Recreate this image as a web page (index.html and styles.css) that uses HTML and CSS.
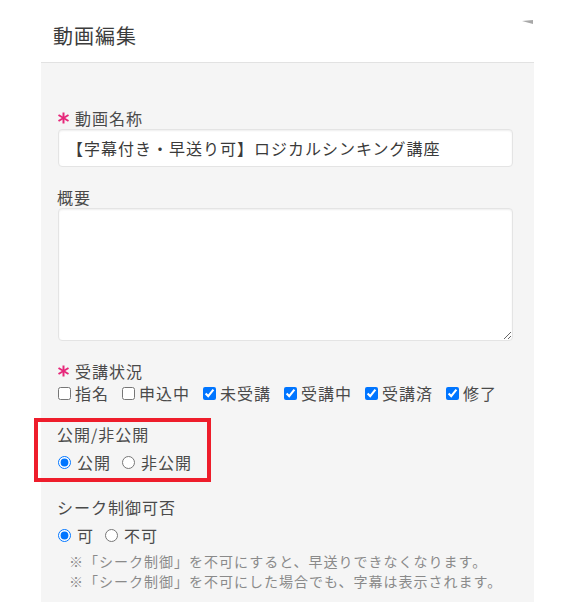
FILE: index.html
```html
<!DOCTYPE html>
<html lang="ja">
<head>
<meta charset="utf-8">
<link rel="stylesheet" href="styles.css">
</head>
<body>
<div class="modal">
  <div class="modal-header">
    <h1 class="modal-title">動画編集</h1>
    <svg class="corner" width="12" height="6" viewBox="0 0 12 6"><polygon points="0,1 11,0 11,4" fill="#a8a8a8"/></svg>
  </div>
  <div class="modal-body">
    <div class="group g-name">
      <div class="label"><svg class="req" width="13" height="12" viewBox="0 0 13 12"><g stroke="#e6287a" stroke-width="2" stroke-linecap="butt"><line x1="6.5" y1="0.5" x2="6.5" y2="11.5"/><line x1="1.5" y1="3" x2="11.5" y2="9"/><line x1="1.5" y1="9" x2="11.5" y2="3"/></g></svg>動画名称</div>
      <input class="text" type="text" value="【字幕付き・早送り可】ロジカルシンキング講座">
    </div>
    <div class="group g-desc">
      <div class="label">概要</div>
      <textarea class="area"></textarea>
    </div>
    <div class="group g-status">
      <div class="label"><svg class="req" width="13" height="12" viewBox="0 0 13 12"><g stroke="#e6287a" stroke-width="2" stroke-linecap="butt"><line x1="6.5" y1="0.5" x2="6.5" y2="11.5"/><line x1="1.5" y1="3" x2="11.5" y2="9"/><line x1="1.5" y1="9" x2="11.5" y2="3"/></g></svg>受講状況</div>
      <div class="checks">
        <label class="check"><input type="checkbox">指名</label>
        <label class="check"><input type="checkbox">申込中</label>
        <label class="check"><input type="checkbox" checked>未受講</label>
        <label class="check"><input type="checkbox" checked>受講中</label>
        <label class="check"><input type="checkbox" checked>受講済</label>
        <label class="check"><input type="checkbox" checked>修了</label>
      </div>
    </div>
    <div class="group g-public">
      <div class="label">公開/非公開</div>
      <div class="radios">
        <label class="radio"><input type="radio" name="pub" checked>公開</label>
        <label class="radio"><input type="radio" name="pub">非公開</label>
      </div>
      <div class="highlight"></div>
    </div>
    <div class="group g-seek">
      <div class="label">シーク制御可否</div>
      <div class="radios">
        <label class="radio"><input type="radio" name="seek" checked>可</label>
        <label class="radio"><input type="radio" name="seek">不可</label>
      </div>
      <p class="note">※「シーク制御」を不可にすると、早送りできなくなります。<br>※「シーク制御」を不可にした場合でも、字幕は表示されます。</p>
    </div>
  </div>
</div>
</body>
</html>
```
FILE: styles.css
```css
* { box-sizing: border-box; }
html, body {
  margin: 0;
  padding: 0;
  background: #ffffff;
}
body {
  font-family: "Noto Sans CJK JP", "Noto Sans", sans-serif;
  color: #4a4a4a;
  letter-spacing: 1px;
}
.modal {
  margin-left: 41px;
  width: 493px;
}
.modal-header {
  position: relative;
  background: #fff;
  border-bottom: 1px solid #e2e2e2;
  padding: 21px 12px 11px;
}
.modal-title {
  margin: 0;
  font-size: 20px;
  line-height: 30px;
  font-weight: 400;
  color: #3c3c3c;
}
.corner {
  position: absolute;
  right: 0;
  top: 20px;
}
.modal-body {
  background: #f5f5f5;
  padding: 44px 21px 11px 16px;
}
.group {
  position: relative;
}
.label {
  display: flex;
  align-items: center;
  font-size: 16px;
  line-height: 22px;
  color: #4a4a4a;
}
.req {
  margin-right: 5px;
  margin-left: 0;
}
.g-name { margin-bottom: 20px; }
.g-desc { margin-bottom: 19px; }
.g-status { margin-bottom: 19px; }
.g-public { margin-bottom: 23px; }
.g-desc .label { line-height: 21px; }
.text {
  display: block;
  width: 455px;
  height: 38px;
  margin: 0 0 0 1px;
  padding: 0 8px;
  border: 1px solid #e4e4e4;
  border-radius: 4px;
  background: #fff;
  box-shadow: inset 0 1px 2px rgba(0,0,0,0.07);
  font-family: "Noto Sans CJK JP", sans-serif;
  font-size: 16px;
  letter-spacing: 1px;
  color: #3a3a3a;
  outline: none;
}
.area {
  display: block;
  width: 455px;
  height: 133px;
  margin: 0 0 0 1px;
  padding: 6px 8px;
  border: 1px solid #e4e4e4;
  border-radius: 4px;
  background: #fff;
  box-shadow: inset 0 1px 2px rgba(0,0,0,0.07);
  font-family: "Noto Sans CJK JP", sans-serif;
  font-size: 16px;
  outline: none;
}
.checks, .radios {
  display: flex;
  align-items: center;
  font-size: 16px;
  line-height: 22px;
  color: #4a4a4a;
}
.radios { margin-top: 6px; }
.check, .radio {
  display: inline-flex;
  align-items: center;
}
.check { margin-right: 12px; }
.check input {
  width: 13px;
  height: 13px;
  margin: 0 4px 0 1px;
}
.radio { margin-right: 10px; }
.radio input {
  width: 13px;
  height: 13px;
  margin: 0 6px 0 1px;
}
.note {
  margin: 5px 0 0 12px;
  font-size: 14px;
  line-height: 20px;
  color: #8a8a8a;
}
.highlight {
  position: absolute;
  left: -23px;
  top: -5px;
  width: 177px;
  height: 64px;
  border: 4px solid #ee1d2b;
  pointer-events: none;
}
```
